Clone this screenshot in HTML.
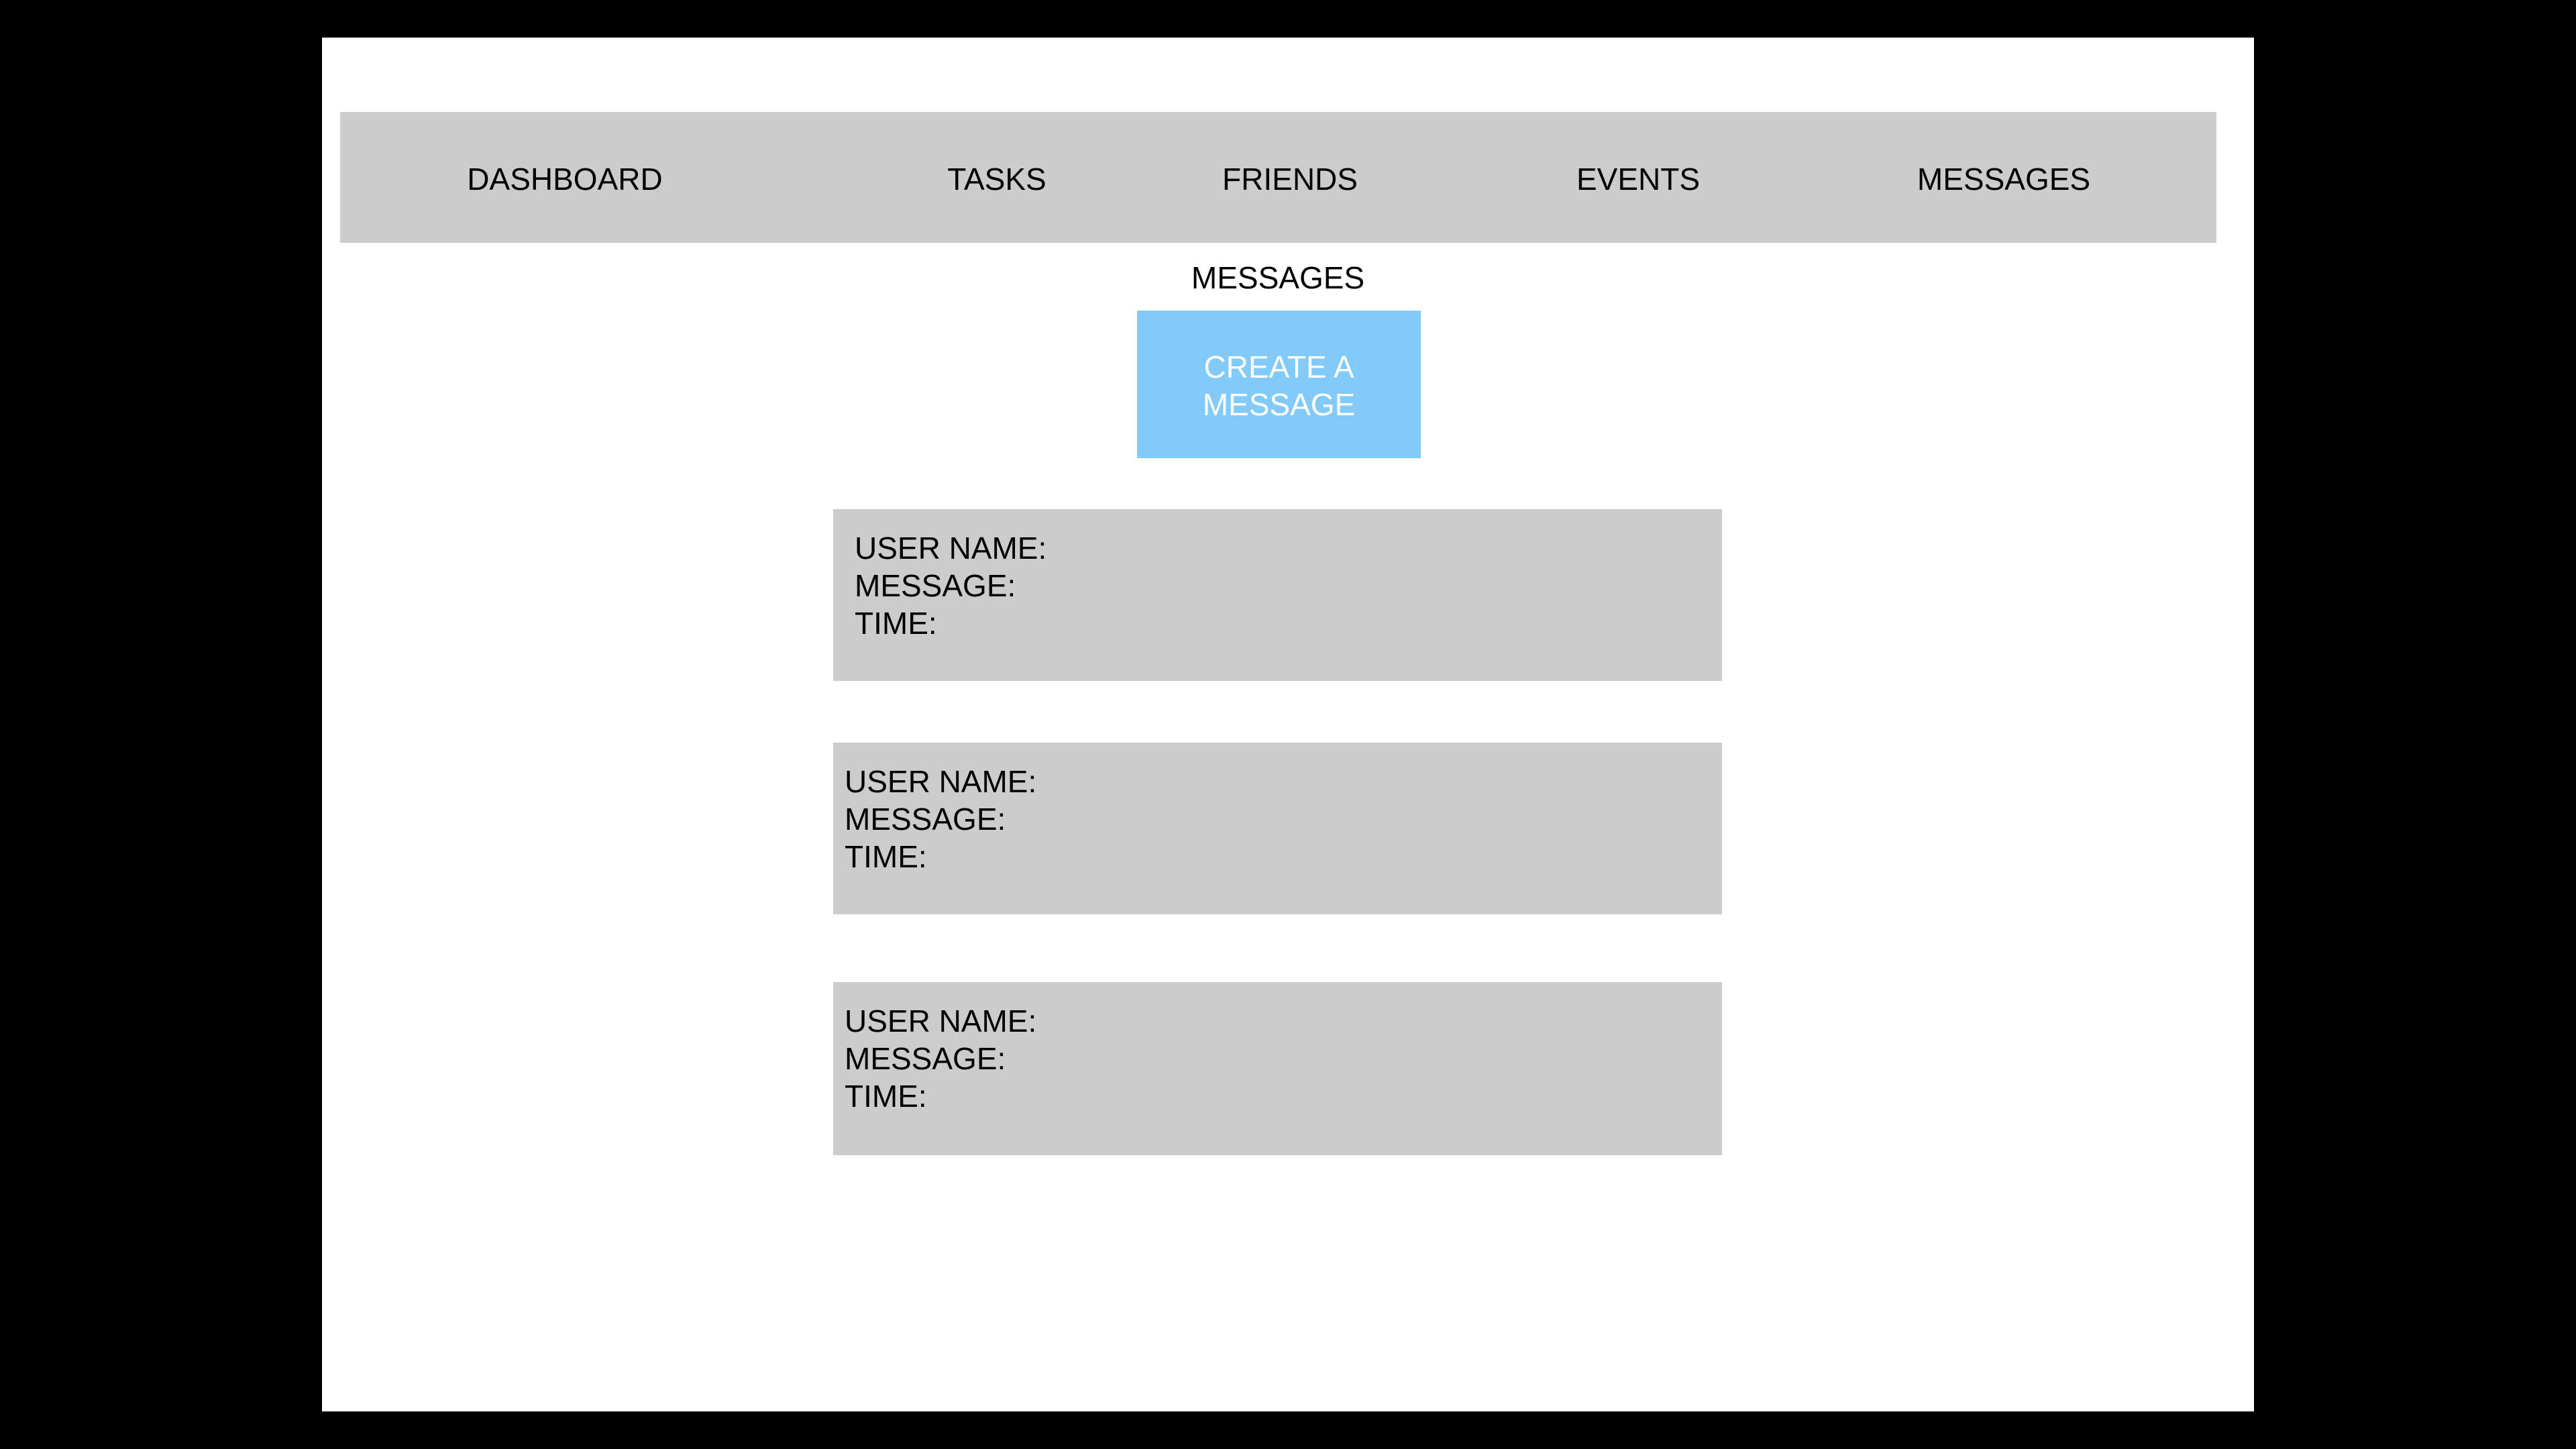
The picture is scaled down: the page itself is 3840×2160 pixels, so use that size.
<!DOCTYPE html>
<html><head><meta charset="utf-8"><style>
html,body{margin:0;padding:0;width:3840px;height:2160px;background:#000;overflow:hidden}
body{position:relative;font-family:"Liberation Sans",sans-serif;color:#000}
.a{position:absolute}
.page{left:480px;top:56px;width:2880px;height:2048px;background:#fff}
.nav{left:507px;top:167px;width:2797px;height:195px;background:#cccccc}
.n{position:absolute;top:267px;transform:translate(-50%,-50%);font-size:46px;white-space:nowrap}
.btn{left:1695px;top:463px;width:423px;height:220px;background:#81caf9;color:#fff;font-size:46px;text-align:center;display:flex;align-items:center;justify-content:center;line-height:56px}
.btn div{margin-top:4px}
.card{left:1242px;width:1325px;height:256px;background:#cccccc;font-size:46px;line-height:56px;box-sizing:border-box}
</style></head><body>
<div class="a page"></div>
<div class="a nav"></div>
<div class="n" style="left:842px">DASHBOARD</div>
<div class="n" style="left:1486px">TASKS</div>
<div class="n" style="left:1923px">FRIENDS</div>
<div class="n" style="left:2442px">EVENTS</div>
<div class="n" style="left:2987px">MESSAGES</div>
<div class="n" style="left:1905px;top:414px">MESSAGES</div>
<div class="a btn"><div>CREATE A<br>MESSAGE</div></div>
<div class="a card" style="top:759px;padding:30px 0 0 32px">USER NAME:<br>MESSAGE:<br>TIME:</div>
<div class="a card" style="top:1107px;padding:30px 0 0 17px">USER NAME:<br>MESSAGE:<br>TIME:</div>
<div class="a card" style="top:1464px;padding:30px 0 0 17px;height:258px">USER NAME:<br>MESSAGE:<br>TIME:</div>
</body></html>
